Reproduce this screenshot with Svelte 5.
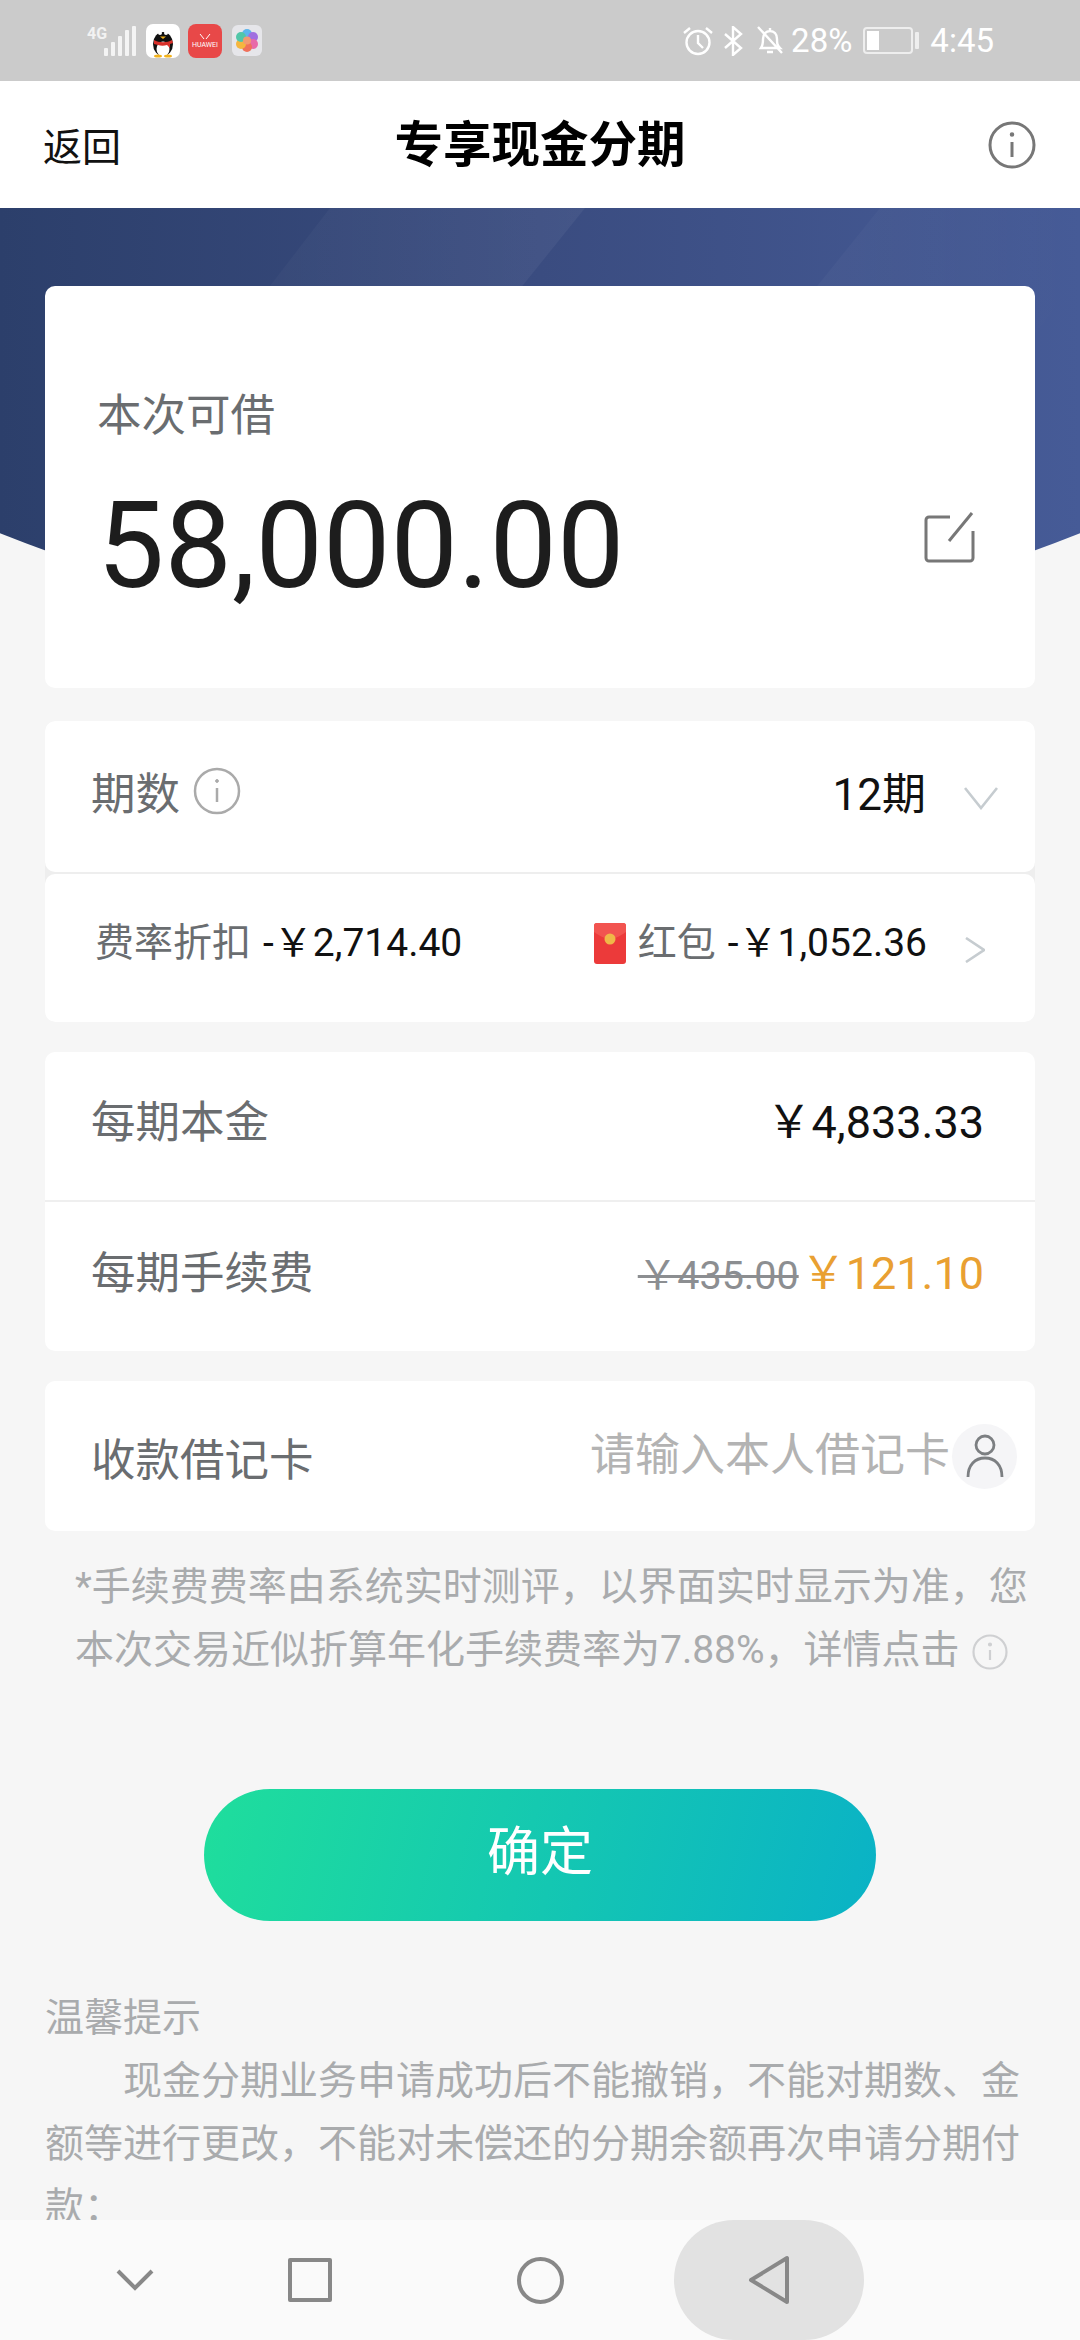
<script lang="ts">
	const noteLine = '*手续费费率由系统实时测评，以界面实时显示为准，您本次交易近似折算年化手续费率为7.88%，详情点击';
	const tips = '现金分期业务申请成功后不能撤销，不能对期数、金额等进行更改，不能对未偿还的分期余额再次申请分期付款：';
	const bars = [8, 14, 20, 26, 30];
</script>

<div class="page">
	<!-- Status bar -->
	<div class="status">
		<div class="status-left">
			<div class="signal">
				<span class="net">4G</span>
				<div class="bars">
					{#each bars as h}
						<i style="height: {h}px"></i>
					{/each}
				</div>
			</div>
			<svg class="app" viewBox="0 0 34 34">
				<rect width="34" height="34" rx="7" fill="#fff" />
				<ellipse cx="17" cy="20" rx="10" ry="12" fill="#111" />
				<ellipse cx="17" cy="25" rx="6.5" ry="7.5" fill="#fff" />
				<circle cx="14" cy="9" r="2" fill="#fff" />
				<circle cx="20" cy="9" r="2" fill="#fff" />
				<path d="M14 12.5h6l-3 2.5z" fill="#f2b21c" />
				<path d="M8 16c5 3 13 3 18 0l1 3-3 1v4l-3-3c-3 1-6 1-9 0l-4-1z" fill="#d8302a" />
				<ellipse cx="12" cy="32" rx="4" ry="1.6" fill="#f2b21c" />
				<ellipse cx="22" cy="32" rx="4" ry="1.6" fill="#f2b21c" />
			</svg>
			<div class="app huawei">
				<svg viewBox="0 0 14 8" width="14" height="8"><path d="M2 1l4 5M12 1L8 6" stroke="#fff" stroke-width="1" fill="none" /></svg>
				<span>HUAWEI</span>
			</div>
			<svg class="app photos" viewBox="0 0 30 31">
				<rect width="30" height="31" rx="6" fill="#e6e6ea" />
				<circle cx="15" cy="9" r="5" fill="#5db5ec" />
				<circle cx="21" cy="12" r="5" fill="#a070e0" />
				<circle cx="21" cy="19" r="5" fill="#e86aa8" />
				<circle cx="15" cy="22" r="5" fill="#f0705a" />
				<circle cx="9" cy="19" r="5" fill="#f5b63e" />
				<circle cx="9" cy="12" r="5" fill="#52c6a8" />
				<circle cx="15" cy="15.5" r="4" fill="#f29a70" />
			</svg>
		</div>
		<div class="status-right">
			<svg width="30" height="30" viewBox="0 0 30 30" fill="none" stroke="#fff" stroke-width="2.4">
				<circle cx="15" cy="16.5" r="11.5" />
				<path d="M15 9v8l5 5M1 7l6-5M29 7l-6-5" />
			</svg>
			<svg class="bt" width="20" height="30" viewBox="0 0 20 30" fill="none" stroke="#fff" stroke-width="2.4">
				<path d="M2 8l16 14-8 7V1l8 7L2 22" />
			</svg>
			<svg class="belloff" width="28" height="30" viewBox="0 0 28 30" fill="none" stroke="#fff" stroke-width="2.4">
				<path d="M5 22c2-3 2-5 2-9 0-5 3-8 7-8s7 3 7 8c0 4 0 6 3 9zM11 26h6M14 2v3M2 1l24 26" />
			</svg>
			<span class="pct">28%</span>
			<div class="battery"><i></i></div>
			<b class="nub"></b>
			<span class="time">4:45</span>
		</div>
	</div>

	<!-- Header -->
	<header>
		<span class="back">返回</span>
		<h1>专享现金分期</h1>
		<svg width="48" height="48" viewBox="0 0 48 48" fill="none" stroke="#777" stroke-width="3">
			<circle cx="24" cy="24" r="22" />
			<path d="M24 21v15" />
			<circle cx="24" cy="13.5" r="1.5" fill="#777" stroke-width="1.5" />
		</svg>
	</header>

	<main>
		<!-- Dark blue backdrop behind the first card -->
		<svg class="hero" width="1080" height="429" viewBox="0 0 1080 429">
			<defs>
				<linearGradient id="heroBg" x1="0" x2="1" y1="0" y2="0">
					<stop offset="0" stop-color="#2c3f6b" />
					<stop offset="0.5" stop-color="#3a4c80" />
					<stop offset="1" stop-color="#465b97" />
				</linearGradient>
				<linearGradient id="bandA" x1="0" x2="1" y1="0" y2="0">
					<stop offset="0" stop-color="#fff" stop-opacity="0" />
					<stop offset="1" stop-color="#fff" stop-opacity="0.05" />
				</linearGradient>
				<linearGradient id="bandB" x1="0" x2="1" y1="0" y2="0">
					<stop offset="0" stop-color="#fff" stop-opacity="0.06" />
					<stop offset="1" stop-color="#fff" stop-opacity="0" />
				</linearGradient>
			</defs>
			<rect width="1080" height="429" fill="url(#heroBg)" />
			<path d="M330 0h255L240 429H0z" fill="url(#bandA)" />
			<path d="M880 0h200v70l-290 359H535z" fill="url(#bandB)" />
		</svg>

		<section class="card amount-card">
			<div class="amount-label">本次可借</div>
			<div class="amount-row">
				<span class="amount">58,000.00</span>
				<svg class="edit" width="52" height="52" viewBox="0 0 52 52" fill="none" stroke="#777" stroke-width="3">
					<path d="M26 6H5a3 3 0 0 0-3 3v38a3 3 0 0 0 3 3h41a3 3 0 0 0 3-3V20" />
					<path d="M25 30L48 2" />
				</svg>
			</div>
		</section>

		<section class="stack">
			<div class="card row term">
				<div class="row-left">
					<span class="label">期数</span>
					<svg class="hint" width="48" height="48" viewBox="0 0 48 48" fill="none" stroke="#aaa" stroke-width="2.5">
						<circle cx="24" cy="24" r="22" />
						<path d="M24 21v14" />
						<circle cx="24" cy="14" r="1.4" fill="#aaa" stroke-width="1" />
					</svg>
				</div>
				<div class="row-right">
					<span class="value">12期</span>
					<svg class="down" width="34" height="24" viewBox="0 0 34 24" fill="none" stroke="#c6ccd0" stroke-width="2.6">
						<path d="M1 2l16 20L33 2" />
					</svg>
				</div>
			</div>
			<div class="card row discount">
				<div class="row-left small">
					<span class="grey">费率折扣</span>
					<span class="minus">-￥2,714.40</span>
				</div>
				<div class="row-right small">
					<svg class="packet" width="32" height="41" viewBox="0 0 32 41">
						<rect width="32" height="41" rx="3" fill="#ec3a3a" />
						<path d="M0 9c6 4 11 7 16 7s10-3 16-7V3a3 3 0 0 0-3-3H3a3 3 0 0 0-3 3z" fill="#f25450" />
						<circle cx="16" cy="16" r="5.5" fill="#f0b848" />
					</svg>
					<span class="grey">红包</span>
					<span class="minus">-￥1,052.36</span>
					<svg class="more" width="20" height="26" viewBox="0 0 20 26" fill="none" stroke="#c6ccd0" stroke-width="2.6">
						<path d="M1 1l18 12L1 25" />
					</svg>
				</div>
			</div>
		</section>

		<section class="card fees">
			<div class="row fee">
				<span class="label">每期本金</span>
				<span class="money">￥4,833.33</span>
			</div>
			<div class="row fee">
				<span class="label">每期手续费</span>
				<div class="fee-values">
					<s>￥435.00</s>
					<span class="orange">￥121.10</span>
				</div>
			</div>
		</section>

		<section class="card row debit">
			<span class="label">收款借记卡</span>
			<div class="row-right">
				<span class="placeholder">请输入本人借记卡</span>
				<div class="avatar">
					<svg width="38" height="44" viewBox="0 0 38 44" fill="none" stroke="#7c7f82" stroke-width="2.8">
						<circle cx="19" cy="11" r="9" />
						<path d="M2 43c0-12 7-19 17-19s17 7 17 19" />
					</svg>
				</div>
			</div>
		</section>

		<p class="note">
			{noteLine}
			<svg width="36" height="36" viewBox="0 0 36 36" fill="none" stroke="#cfd0d2" stroke-width="2.2">
				<circle cx="18" cy="18" r="16.5" />
				<path d="M18 16v10" />
				<circle cx="18" cy="10.5" r="1" fill="#cfd0d2" />
			</svg>
		</p>

		<button class="confirm">确定</button>

		<h2>温馨提示</h2>
		<p class="tips">{tips}</p>
	</main>

	<!-- System navigation -->
	<nav>
		<svg class="nav-down" width="38" height="22" viewBox="0 0 38 22" fill="none" stroke="#888" stroke-width="4">
			<path d="M2 2l17 17L36 2" />
		</svg>
		<div class="nav-square"></div>
		<div class="nav-circle"></div>
		<div class="nav-back">
			<svg width="42" height="50" viewBox="0 0 42 50" fill="none" stroke="#888" stroke-width="4" stroke-linejoin="round">
				<path d="M39 3v44L3 25z" />
			</svg>
		</div>
	</nav>
</div>

<style>
	:global(body) {
		margin: 0;
		background: #f6f6f6;
	}

	.page {
		position: relative;
		width: 1080px;
		height: 2340px;
		overflow: hidden;
		background: #f6f6f6;
		font-family: Roboto, "Noto Sans CJK SC", sans-serif;
		color: #111;
	}

	.status {
		height: 81px;
		background: #cbcbcb;
		display: flex;
		justify-content: space-between;
		align-items: center;
		padding: 0 86px 0 87px;
		box-sizing: border-box;
		color: #fff;
	}
	.status-left,
	.status-right {
		display: flex;
		align-items: center;
	}
	.signal {
		position: relative;
		width: 49px;
		height: 30px;
		margin-right: 10px;
	}
	.net {
		position: absolute;
		left: 0;
		top: -2px;
		font-size: 16px;
		font-weight: 700;
		color: #f2f2f2;
	}
	.bars {
		position: absolute;
		right: 0;
		bottom: 0;
		display: flex;
		align-items: flex-end;
		gap: 3px;
	}
	.bars i {
		display: block;
		width: 4px;
		background: #f4f4f4;
		border-radius: 1px;
	}
	.app {
		width: 34px;
		height: 34px;
		margin-right: 8px;
	}
	.huawei {
		background: #e84848;
		border-radius: 8px;
		display: flex;
		flex-direction: column;
		align-items: center;
		justify-content: center;
		color: #fff;
		font-size: 7px;
		line-height: 8px;
		margin-right: 10px;
	}
	.photos {
		width: 30px;
		height: 31px;
		margin-right: 0;
	}
	.bt {
		margin-left: 10px;
	}
	.belloff {
		margin-left: 13px;
	}
	.pct {
		font-size: 33px;
		margin-left: 7px;
		line-height: 40px;
	}
	.battery {
		width: 50px;
		height: 27px;
		box-sizing: border-box;
		border: 2px solid #eee;
		border-radius: 4px;
		margin-left: 11px;
		padding: 2px;
	}
	.battery i {
		display: block;
		width: 12px;
		height: 100%;
		background: #fff;
	}
	.nub {
		width: 4px;
		height: 17px;
		background: #eee;
		margin-left: 2px;
		border-radius: 1px;
	}
	.time {
		font-size: 33px;
		margin-left: 11px;
		line-height: 40px;
	}

	header {
		position: relative;
		height: 127px;
		background: #fff;
		display: flex;
		justify-content: space-between;
		align-items: center;
		padding: 0 44px 0 43px;
	}
	.back {
		font-size: 39px;
		color: #111;
		margin-top: -2px;
	}
	header h1 {
		position: absolute;
		left: 0;
		right: 0;
		top: 1px;
		margin: 0;
		text-align: center;
		font-size: 48.5px;
		line-height: 127px;
		font-weight: 700;
		color: #000;
	}

	main {
		position: relative;
		padding: 78px 45px 0;
	}
	.hero {
		position: absolute;
		left: 0;
		top: 0;
		clip-path: circle(1458px at 540px -1029px);
	}

	.card {
		position: relative;
		background: #fff;
		border-radius: 10px;
	}

	.amount-card {
		height: 402px;
		box-sizing: border-box;
		padding: 108px 59px 0 52px;
	}
	.amount-label {
		font-size: 44.5px;
		line-height: 44px;
		color: #6a6d70;
	}
	.amount-row {
		display: flex;
		justify-content: space-between;
		align-items: center;
		margin-top: 38px;
		height: 140px;
	}
	.amount {
		font-size: 120px;
		line-height: 140px;
		color: #1d1d1d;
	}
	.edit {
		margin-bottom: 18px;
	}

	.row {
		box-sizing: border-box;
		display: flex;
		justify-content: space-between;
		align-items: center;
	}
	.row-left,
	.row-right {
		display: flex;
		align-items: center;
	}
	.label {
		font-size: 44.5px;
		color: #6a6d70;
	}

	.stack {
		margin-top: 33px;
		display: flex;
		flex-direction: column;
		gap: 2px;
		background: #eee;
		border-radius: 10px;
	}
	.term {
		height: 151px;
		padding: 0 37px 12px 46px;
	}
	.hint {
		margin-left: 13px;
	}
	.value {
		font-size: 44px;
	}
	.down {
		margin-left: 38px;
		margin-top: 14px;
	}
	.discount {
		height: 148px;
		padding: 0 50px 18px 50px;
	}
	.small {
		font-size: 39px;
	}
	.grey {
		color: #6a6d70;
	}
	.minus {
		margin-left: 12px;
		color: #111;
	}
	.packet {
		margin-right: 12px;
		margin-top: 9px;
	}
	.more {
		margin-left: 38px;
		margin-top: 21px;
	}

	.fees {
		margin-top: 30px;
	}
	.fee {
		height: 148px;
		padding: 0 51px 15px 46px;
	}
	.fee + .fee {
		height: 151px;
		border-top: 2px solid #efefef;
	}
	.money {
		font-size: 45px;
	}
	.fee-values {
		display: flex;
		align-items: baseline;
		gap: 2px;
	}
	s {
		font-size: 39.5px;
		color: #8c8e91;
		text-decoration-thickness: 3px;
	}
	.orange {
		font-size: 45px;
		color: #e9a032;
	}

	.debit {
		margin-top: 30px;
		height: 150px;
		padding: 0 18px 0 46px;
	}
	.placeholder {
		font-size: 45px;
		color: #b3b3b3;
		margin-top: -9px;
	}
	.avatar {
		width: 65px;
		height: 65px;
		margin-left: 2px;
		border-radius: 50%;
		background: #f5f5f7;
		display: flex;
		align-items: center;
		justify-content: center;
	}

	.note {
		margin: 25px 0 0 30px;
		font-size: 39px;
		line-height: 63px;
		color: #a9abad;
	}
	.note svg {
		vertical-align: -7px;
		margin-left: 3px;
	}

	.confirm {
		display: block;
		width: 672px;
		height: 132px;
		margin: 107px auto 0;
		padding: 0 0 14px;
		border: none;
		border-radius: 66px;
		background: linear-gradient(105deg, #1fde9c 0%, #0ab2c6 100%);
		color: #fff;
		font-family: inherit;
		font-size: 53px;
	}

	h2 {
		margin: 66px 0 0;
		font-size: 39px;
		line-height: 63px;
		font-weight: 400;
		color: #a9abad;
	}
	.tips {
		margin: 0;
		width: 990px;
		font-size: 39px;
		line-height: 63px;
		text-indent: 78px;
		color: #a9abad;
	}

	nav {
		position: absolute;
		left: 0;
		right: 0;
		bottom: 0;
		height: 120px;
		background: #fafafa;
	}
	nav > * {
		position: absolute;
	}
	.nav-down {
		left: 116px;
		top: 49px;
	}
	.nav-square {
		left: 288px;
		top: 38px;
		width: 44px;
		height: 44px;
		box-sizing: border-box;
		border: 4px solid #888;
		border-radius: 2px;
	}
	.nav-circle {
		left: 517px;
		top: 37px;
		width: 47px;
		height: 47px;
		box-sizing: border-box;
		border: 4px solid #888;
		border-radius: 50%;
	}
	.nav-back {
		left: 674px;
		top: 0;
		width: 190px;
		height: 120px;
		border-radius: 60px;
		background: #e2e2e2;
		display: flex;
		align-items: center;
		justify-content: center;
	}
</style>
